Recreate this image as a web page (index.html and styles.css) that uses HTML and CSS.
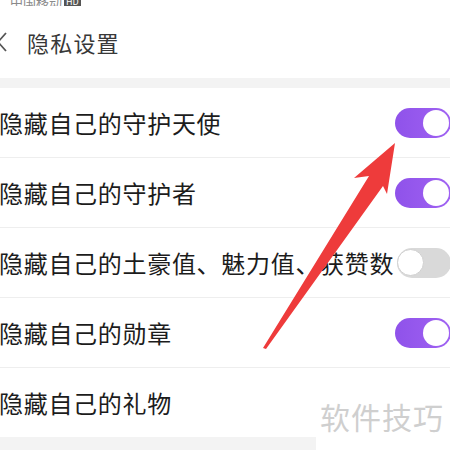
FILE: index.html
```html
<!DOCTYPE html>
<html>
<head>
    <meta charset="UTF-8">
    <title>隐私设置</title>
    <link rel="stylesheet" href="styles.css">
</head>
<body>
    <div class="page">
        <div class="status-bar">
            <span class="carrier">中国移动</span>
            <span class="hd">HD</span>
        </div>
        <div class="header">
            <svg class="back" width="10" height="20" viewBox="0 0 10 20">
                <polyline points="6,1 -2,10 6,19" fill="none" stroke="#555" stroke-width="1.8"/>
            </svg>
            <div class="title">隐私设置</div>
        </div>
        <div class="gap"></div>
        <div class="list">
            <div class="row">
                <span class="label">隐藏自己的守护天使</span>
                <span class="switch on"><span class="knob"></span></span>
            </div>
            <div class="row">
                <span class="label">隐藏自己的守护者</span>
                <span class="switch on"><span class="knob"></span></span>
            </div>
            <div class="row">
                <span class="label">隐藏自己的土豪值、魅力值、获赞数</span>
                <span class="switch off"><span class="knob"></span></span>
            </div>
            <div class="row">
                <span class="label">隐藏自己的勋章</span>
                <span class="switch on"><span class="knob"></span></span>
            </div>
            <div class="row last">
                <span class="label">隐藏自己的礼物</span>
                <span class="switch on"><span class="knob"></span></span>
            </div>
        </div>
        <div class="gap bottom"></div>

        <div class="watermark">软件技巧</div>

        <svg class="arrow" width="450" height="450" viewBox="0 0 450 450">
            <polygon points="395,143 387,194 383,186 266,349 263,348 369,176 354,178" fill="#ee3b3b"/>
        </svg>
    </div>
</body>
</html>
```

FILE: styles.css
```css
body {
    margin: 0;
    width: 450px;
    height: 450px;
    overflow: hidden;
    background: #fff;
    font-family: "Noto Sans CJK SC", "Noto Sans", sans-serif;
    color: #1c1c1c;
}

.page {
    position: relative;
    width: 450px;
    height: 450px;
    overflow: hidden;
}

.status-bar {
    height: 6px;
    display: flex;
    align-items: flex-end;
    gap: 2px;
    padding-left: 10px;
    overflow: hidden;
}

.carrier {
    font-size: 13px;
    line-height: 13px;
    color: #8a8a8a;
    margin-bottom: -2px;
}

.hd {
    font-size: 9px;
    line-height: 10px;
    background: #555;
    color: #fff;
    padding: 0 2px;
    margin-bottom: -1px;
}

.header {
    height: 72px;
    display: flex;
    align-items: center;
}

.back {
    width: 10px;
    height: 20px;
    margin-right: 17px;
}

.title {
    font-size: 22px;
    letter-spacing: 1.2px;
    color: #383838;
}

.gap {
    height: 10px;
    background: #f3f3f3;
}

.gap.bottom {
    height: 14px;
    width: 316px;
}

.row {
    height: 69px;
    display: flex;
    align-items: center;
    border-bottom: 1px solid #eeeeee;
}

.row.last {
    border-bottom: none;
}

.label {
    flex: 1;
    min-width: 0;
    overflow: hidden;
    white-space: nowrap;
    font-size: 24px;
    letter-spacing: 0.7px;
    margin-left: -1px;
}

.switch {
    flex: none;
    width: 56px;
    height: 30px;
    border-radius: 15px;
    margin-right: -1px;
    display: flex;
    align-items: center;
    box-sizing: border-box;
    padding: 0 2px;
}

.switch.on {
    background: linear-gradient(90deg, #8f52ea, #a062f2);
    justify-content: flex-end;
    margin-left: 2px;
}

.switch.off {
    background: #d9d9d9;
    width: 54px;
    padding: 0;
}

.knob {
    width: 26px;
    height: 26px;
    border-radius: 50%;
    background: #fff;
}

.switch.off .knob {
    width: 27px;
    height: 27px;
    border: 1px solid #d0d0d0;
    box-sizing: border-box;
}

.watermark {
    position: absolute;
    left: 316px;
    top: 388px;
    width: 134px;
    height: 62px;
    background: #fff;
    font-size: 30px;
    letter-spacing: 1px;
    color: #cfcfcf;
    padding: 6px 0 0 4px;
    box-sizing: border-box;
}

.arrow {
    position: absolute;
    left: 0;
    top: 0;
}
```
